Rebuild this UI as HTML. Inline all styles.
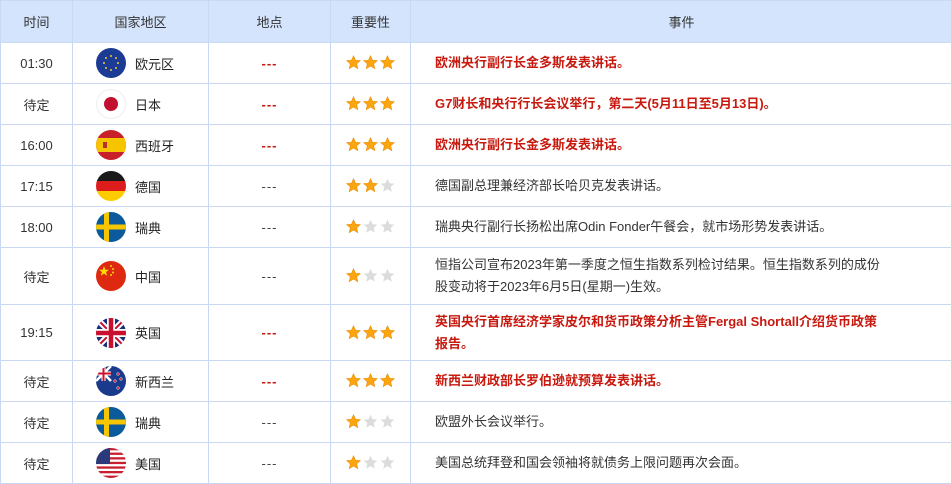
<!DOCTYPE html>
<html><head><meta charset="utf-8">
<style>
*{margin:0;padding:0;box-sizing:border-box}
body{width:951px;height:483px;overflow:hidden;background:#fff;font-family:"Liberation Sans","Noto Sans CJK SC",sans-serif;font-size:13px;color:#333}
table{border-collapse:collapse;table-layout:fixed;width:952px;position:absolute;left:0;top:0}
td,th{border:1px solid #c9d9f3;text-align:center;vertical-align:middle;padding:0}
th{background:#d4e4fc;height:42px;font-weight:normal;font-size:13px;color:#333}
td.c{text-align:left;padding-left:23px}
td.c div{display:flex;align-items:center;height:30px}
td.c svg{display:block;margin-right:9px;flex:none}
td.c span{color:#222}
td.e{text-align:left;padding-left:24px;padding-right:60px;line-height:22px}
.r{color:#c8190f;font-weight:bold}
.d{color:#c8190f;font-weight:bold;letter-spacing:1px}
.dn{color:#444;letter-spacing:1px}
.st svg{margin:0 1px;vertical-align:middle;position:relative;top:-1px}
</style></head><body>
<svg width="0" height="0" style="position:absolute">
<defs>
<symbol id="so" viewBox="0 0 16 16"><polygon points="8,0.8 10.2,5.6 15.3,6 11.4,9.4 12.6,14.6 8,11.8 3.4,14.6 4.6,9.4 0.7,6 5.8,5.6" fill="#fba511" stroke="#e98a00" stroke-width="0.6"/></symbol>
<symbol id="sg" viewBox="0 0 16 16"><polygon points="8,0.8 10.2,5.6 15.3,6 11.4,9.4 12.6,14.6 8,11.8 3.4,14.6 4.6,9.4 0.7,6 5.8,5.6" fill="#dcdcdc"/></symbol>
<clipPath id="cc"><circle cx="15" cy="15" r="15"/></clipPath>
</defs></svg>
<table>
<colgroup><col style="width:72px"><col style="width:136px"><col style="width:122px"><col style="width:80px"><col style="width:542px"></colgroup>
<tr><th>时间</th><th>国家地区</th><th>地点</th><th>重要性</th><th>事件</th></tr>

<tr style="height:41px"><td>01:30</td><td class="c"><div><svg width="30" height="30"><g clip-path="url(#cc)"><rect width="30" height="30" fill="#1c3b95"/><g fill="#f3cb2d"><circle cx="15" cy="8" r="1"/><circle cx="15" cy="22" r="1"/><circle cx="8" cy="15" r="1"/><circle cx="22" cy="15" r="1"/><circle cx="10" cy="10" r="1"/><circle cx="20" cy="10" r="1"/><circle cx="10" cy="20" r="1"/><circle cx="20" cy="20" r="1"/></g></g></svg><span>欧元区</span></div></td><td class="d">---</td><td class="st"><svg width="15" height="15"><use href="#so"/></svg><svg width="15" height="15"><use href="#so"/></svg><svg width="15" height="15"><use href="#so"/></svg></td><td class="e r">欧洲央行副行长金多斯发表讲话。</td></tr>

<tr style="height:41px"><td>待定</td><td class="c"><div><svg width="30" height="30"><circle cx="15" cy="15" r="14.5" fill="#fff" stroke="#eee"/><circle cx="15" cy="15" r="7" fill="#c3102e"/></svg><span>日本</span></div></td><td class="d">---</td><td class="st"><svg width="15" height="15"><use href="#so"/></svg><svg width="15" height="15"><use href="#so"/></svg><svg width="15" height="15"><use href="#so"/></svg></td><td class="e r">G7财长和央行行长会议举行，第二天(5月11日至5月13日)。</td></tr>

<tr style="height:41px"><td>16:00</td><td class="c"><div><svg width="30" height="30"><g clip-path="url(#cc)"><rect width="30" height="30" fill="#c8202a"/><rect y="8" width="30" height="14" fill="#f7c400"/><rect x="7" y="12" width="4" height="6" fill="#b5332a"/></g></svg><span>西班牙</span></div></td><td class="d">---</td><td class="st"><svg width="15" height="15"><use href="#so"/></svg><svg width="15" height="15"><use href="#so"/></svg><svg width="15" height="15"><use href="#so"/></svg></td><td class="e r">欧洲央行副行长金多斯发表讲话。</td></tr>

<tr style="height:41px"><td>17:15</td><td class="c"><div><svg width="30" height="30"><g clip-path="url(#cc)"><rect width="30" height="10" fill="#1a1a1a"/><rect y="10" width="30" height="10" fill="#dd1c1c"/><rect y="20" width="30" height="10" fill="#fccc00"/></g></svg><span>德国</span></div></td><td class="dn">---</td><td class="st"><svg width="15" height="15"><use href="#so"/></svg><svg width="15" height="15"><use href="#so"/></svg><svg width="15" height="15"><use href="#sg"/></svg></td><td class="e">德国副总理兼经济部长哈贝克发表讲话。</td></tr>

<tr style="height:41px"><td>18:00</td><td class="c"><div><svg width="30" height="30"><g clip-path="url(#cc)"><rect width="30" height="30" fill="#0a5a9c"/><rect x="8" width="5" height="30" fill="#f7c600"/><rect y="12.5" width="30" height="5" fill="#f7c600"/></g></svg><span>瑞典</span></div></td><td class="dn">---</td><td class="st"><svg width="15" height="15"><use href="#so"/></svg><svg width="15" height="15"><use href="#sg"/></svg><svg width="15" height="15"><use href="#sg"/></svg></td><td class="e">瑞典央行副行长扬松出席Odin Fonder午餐会，就市场形势发表讲话。</td></tr>

<tr style="height:57px"><td>待定</td><td class="c"><div><svg width="30" height="30"><g clip-path="url(#cc)"><rect width="30" height="30" fill="#de2910"/><polygon points="8,5 9.3,8.8 13,8.8 10,11 11.2,14.8 8,12.5 4.8,14.8 6,11 3,8.8 6.7,8.8" fill="#ffde00"/><g fill="#ffde00"><circle cx="15" cy="5" r="1"/><circle cx="17" cy="8" r="1"/><circle cx="17" cy="11.5" r="1"/><circle cx="15" cy="14" r="1"/></g></g></svg><span>中国</span></div></td><td class="dn">---</td><td class="st"><svg width="15" height="15"><use href="#so"/></svg><svg width="15" height="15"><use href="#sg"/></svg><svg width="15" height="15"><use href="#sg"/></svg></td><td class="e">恒指公司宣布2023年第一季度之恒生指数系列检讨结果。恒生指数系列的成份股变动将于2023年6月5日(星期一)生效。</td></tr>

<tr style="height:56px"><td>19:15</td><td class="c"><div><svg width="30" height="30"><g clip-path="url(#cc)"><rect width="30" height="30" fill="#1a2f7a"/><path d="M0 0L30 30M30 0L0 30" stroke="#fff" stroke-width="6"/><path d="M0 0L30 30M30 0L0 30" stroke="#c8102e" stroke-width="2"/><path d="M15 0V30M0 15H30" stroke="#fff" stroke-width="8"/><path d="M15 0V30M0 15H30" stroke="#c8102e" stroke-width="4.5"/></g></svg><span>英国</span></div></td><td class="d">---</td><td class="st"><svg width="15" height="15"><use href="#so"/></svg><svg width="15" height="15"><use href="#so"/></svg><svg width="15" height="15"><use href="#so"/></svg></td><td class="e r">英国央行首席经济学家皮尔和货币政策分析主管Fergal Shortall介绍货币政策<br>报告。</td></tr>

<tr style="height:41px"><td>待定</td><td class="c"><div><svg width="30" height="30"><g clip-path="url(#cc)"><rect width="30" height="30" fill="#1a3b8c"/><path d="M0 0L15 15M15 0L0 15" stroke="#fff" stroke-width="2.5"/><path d="M7.5 0V15M0 7.5H15" stroke="#fff" stroke-width="4"/><path d="M7.5 0V15M0 7.5H15" stroke="#d0112b" stroke-width="2"/><g fill="#d0112b" stroke="#fff" stroke-width="0.5"><circle cx="22" cy="8" r="1.3"/><circle cx="25" cy="13" r="1.3"/><circle cx="19" cy="15" r="1.3"/><circle cx="22" cy="22" r="1.3"/></g></g></svg><span>新西兰</span></div></td><td class="d">---</td><td class="st"><svg width="15" height="15"><use href="#so"/></svg><svg width="15" height="15"><use href="#so"/></svg><svg width="15" height="15"><use href="#so"/></svg></td><td class="e r">新西兰财政部长罗伯逊就预算发表讲话。</td></tr>

<tr style="height:41px"><td>待定</td><td class="c"><div><svg width="30" height="30"><g clip-path="url(#cc)"><rect width="30" height="30" fill="#0a5a9c"/><rect x="8" width="5" height="30" fill="#f7c600"/><rect y="12.5" width="30" height="5" fill="#f7c600"/></g></svg><span>瑞典</span></div></td><td class="dn">---</td><td class="st"><svg width="15" height="15"><use href="#so"/></svg><svg width="15" height="15"><use href="#sg"/></svg><svg width="15" height="15"><use href="#sg"/></svg></td><td class="e">欧盟外长会议举行。</td></tr>

<tr style="height:41px"><td>待定</td><td class="c"><div><svg width="30" height="30"><g clip-path="url(#cc)"><rect width="30" height="30" fill="#fff"/><g fill="#c8202f"><rect y="0" width="30" height="2.3"/><rect y="4.6" width="30" height="2.3"/><rect y="9.2" width="30" height="2.3"/><rect y="13.8" width="30" height="2.3"/><rect y="18.4" width="30" height="2.3"/><rect y="23" width="30" height="2.3"/><rect y="27.6" width="30" height="2.4"/></g><rect width="14" height="16" fill="#2a3a7a"/></g></svg><span>美国</span></div></td><td class="dn">---</td><td class="st"><svg width="15" height="15"><use href="#so"/></svg><svg width="15" height="15"><use href="#sg"/></svg><svg width="15" height="15"><use href="#sg"/></svg></td><td class="e">美国总统拜登和国会领袖将就债务上限问题再次会面。</td></tr>
</table>
</body></html>
